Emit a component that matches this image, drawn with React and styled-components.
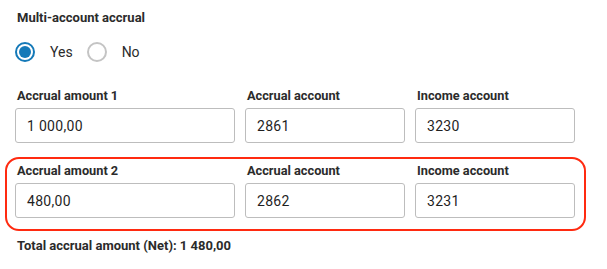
import React from "react";
import styled, { createGlobalStyle } from "styled-components";

const Global = createGlobalStyle`
  html, body { margin: 0; padding: 0; background: #fff; }
  body { font-family: Roboto, "Noto Sans", Arial, sans-serif; color: #2a2a2a; }
  * { box-sizing: border-box; }
`;

const Page = styled.div`
  padding: 10px 0 0 15px;
  width: 607px;
  display: flex;
  flex-direction: column;
  align-items: flex-start;
`;

const Title = styled.div`
  font-size: 13px;
  font-weight: 700;
  line-height: 15px;
  padding-left: 2px;
  color: #2b2b2b;
`;

const RadioGroup = styled.div`
  display: flex;
  align-items: center;
  margin-top: 16px;
  height: 22px;
`;

const RadioOption = styled.label`
  display: flex;
  align-items: center;
  gap: 15px;
  font-size: 14px;
  color: #2b2b2b;
  margin-right: 14px;
`;

const RadioCircle = styled.span`
  width: 20px;
  height: 20px;
  border-radius: 50%;
  border: 2px solid ${(p) => (p.$checked ? "#1479b8" : "#c4c4c4")};
  display: flex;
  align-items: center;
  justify-content: center;
  &::after {
    content: "";
    width: 12px;
    height: 12px;
    border-radius: 50%;
    background: ${(p) => (p.$checked ? "#1479b8" : "transparent")};
  }
`;

const Row = styled.div`
  display: grid;
  grid-template-columns: 220px 160px 160px;
  column-gap: 10px;
  margin-top: ${(p) => p.$mt || 0}px;
`;

const Highlight = styled.div`
  margin: ${(p) => p.$mt || 0}px 0 0 -10px;
  border: 2px solid #ff2a10;
  border-radius: 14px;
  padding: 4px 9px 11px 8px;
`;

const Field = styled.div`
  display: flex;
  flex-direction: column;
`;

const Label = styled.div`
  font-size: 12.75px;
  font-weight: 700;
  line-height: 15px;
  padding-left: 2px;
  color: #2b2b2b;
  margin-bottom: 5px;
`;

const Input = styled.div`
  height: 35px;
  border: 1px solid #bdbdbd;
  border-radius: 3px;
  padding: 0 11px;
  display: flex;
  align-items: center;
  font-size: 14px;
  letter-spacing: 0.3px;
  color: #1f1f1f;
`;

const Total = styled.div`
  font-size: 13px;
  font-weight: 700;
  line-height: 15px;
  padding-left: 2px;
  margin-top: 7px;
  color: #2b2b2b;
`;

const fields1 = [
  ["Accrual amount 1", "1 000,00"],
  ["Accrual account", "2861"],
  ["Income account", "3230"],
];
const fields2 = [
  ["Accrual amount 2", "480,00"],
  ["Accrual account", "2862"],
  ["Income account", "3231"],
];

const Fields = ({ items }) =>
  items.map(([l, v], i) => (
    <Field key={i}>
      <Label>{l}</Label>
      <Input>{v}</Input>
    </Field>
  ));

export default function App() {
  return (
    <>
      <Global />
      <Page>
        <Title>Multi-account accrual</Title>
        <RadioGroup>
          <RadioOption>
            <RadioCircle $checked />
            Yes
          </RadioOption>
          <RadioOption>
            <RadioCircle />
            No
          </RadioOption>
        </RadioGroup>
        <Row $mt={25}>
          <Fields items={fields1} />
        </Row>
        <Highlight $mt={14}>
          <Row>
            <Fields items={fields2} />
          </Row>
        </Highlight>
        <Total>Total accrual amount (Net): 1 480,00</Total>
      </Page>
    </>
  );
}
